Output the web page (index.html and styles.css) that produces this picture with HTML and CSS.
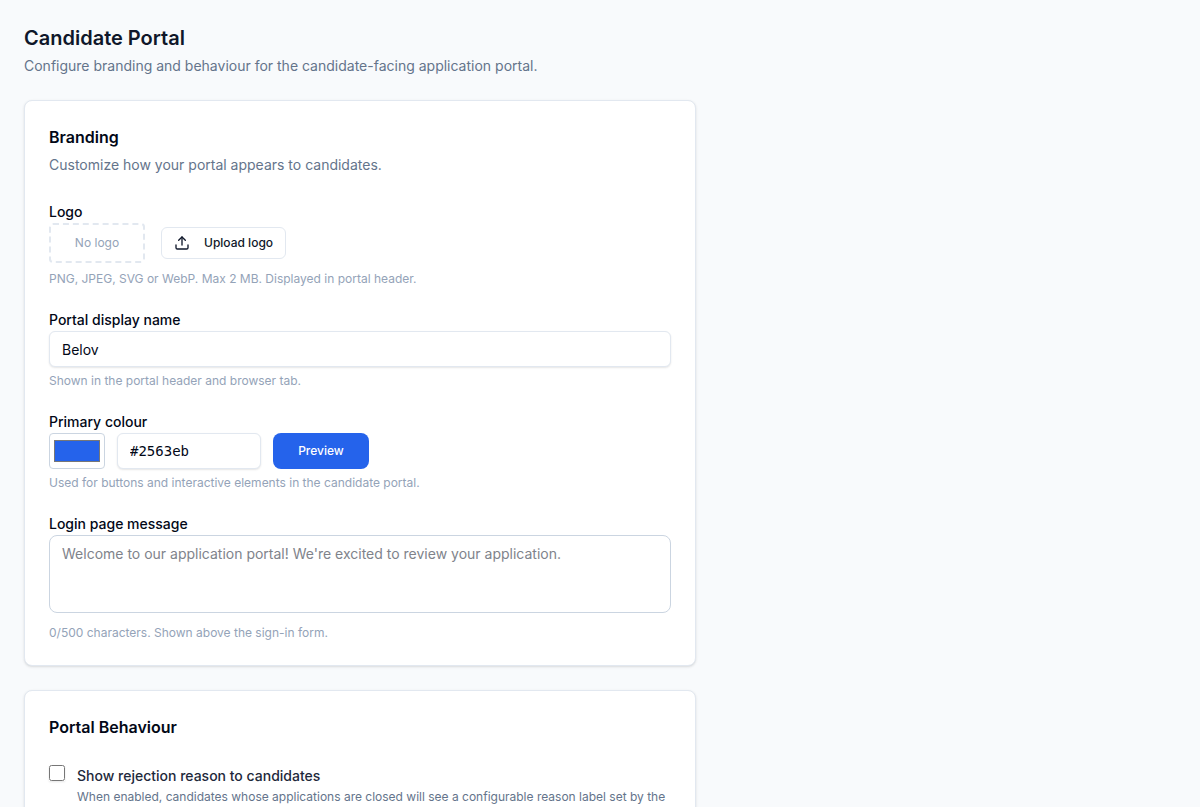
FILE: index.html
```html
<!DOCTYPE html>
<html lang="en">
<head>
  <meta charset="UTF-8">
  <meta name="viewport" content="width=device-width, initial-scale=1.0">
  <title>Candidate Portal</title>
  <link rel="stylesheet" href="styles.css">
</head>
<body>
  <main class="page">
    <header class="page-header">
      <h1>Candidate Portal</h1>
      <p>Configure branding and behaviour for the candidate-facing application portal.</p>
    </header>

    <section class="card">
      <div class="card-header">
        <h2>Branding</h2>
        <p>Customize how your portal appears to candidates.</p>
      </div>

      <div class="fields">
        <div class="field">
          <span class="label">Logo</span>
          <div class="row logo-row">
            <div class="logo-empty">No logo</div>
            <button type="button" class="btn-upload">
              <svg width="16" height="16" viewBox="0 0 24 24" fill="none" stroke="currentColor" stroke-width="2" stroke-linecap="round" stroke-linejoin="round" aria-hidden="true">
                <path d="M21 15v4a2 2 0 0 1-2 2H5a2 2 0 0 1-2-2v-4"/>
                <polyline points="17 8 12 3 7 8"/>
                <line x1="12" y1="3" x2="12" y2="15"/>
              </svg>
              Upload logo
            </button>
          </div>
          <p class="hint hint-far">PNG, JPEG, SVG or WebP. Max 2 MB. Displayed in portal header.</p>
        </div>

        <div class="field">
          <label class="label" for="portalName">Portal display name</label>
          <input type="text" id="portalName" class="input" value="Belov">
          <p class="hint">Shown in the portal header and browser tab.</p>
        </div>

        <div class="field">
          <label class="label" for="primaryColour">Primary colour</label>
          <div class="row colour-row">
            <input type="color" id="primaryColour" class="swatch" value="#2563eb">
            <input type="text" id="primaryHex" class="input hex" value="#2563eb" aria-label="Primary colour hex">
            <button type="button" class="btn-preview">Preview</button>
          </div>
          <p class="hint">Used for buttons and interactive elements in the candidate portal.</p>
        </div>

        <div class="field">
          <label class="label" for="loginMessage">Login page message</label>
          <textarea id="loginMessage" class="textarea" rows="3" maxlength="500" placeholder="Welcome to our application portal! We're excited to review your application."></textarea>
          <p class="hint hint-message">0/500 characters. Shown above the sign-in form.</p>
        </div>
      </div>
    </section>

    <section class="card">
      <div class="card-header">
        <h2>Portal Behaviour</h2>
      </div>

      <div class="option">
        <input type="checkbox" id="showReason" class="checkbox">
        <div>
          <label class="label option-label" for="showReason">Show rejection reason to candidates</label>
          <p class="option-text">When enabled, candidates whose applications are closed will see a configurable reason label set by the</p>
        </div>
      </div>
    </section>
  </main>
</body>
</html>
```

FILE: styles.css
```css
* {
  box-sizing: border-box;
}

body {
  margin: 0;
  background: #f8fafc;
  color: #020817;
  font-family: Inter, sans-serif;
  font-size: 14px;
  line-height: 20px;
}

h1,
h2,
p {
  margin: 0;
}

input,
textarea,
button {
  font: inherit;
  color: inherit;
}

.page {
  display: flex;
  flex-direction: column;
  gap: 24px;
  max-width: 720px;
  padding: 24px;
}

.page-header h1 {
  font-size: 20px;
  line-height: 28px;
  font-weight: 600;
  color: #0f172a;
}

.page-header p {
  margin-top: 4px;
  color: #64748b;
}

.card {
  background: #fff;
  border: 1px solid #e2e8f0;
  border-radius: 8px;
  box-shadow: 0 1px 3px rgba(0, 0, 0, 0.1), 0 1px 2px -1px rgba(0, 0, 0, 0.1);
  padding: 24px;
}

.card-header {
  margin-bottom: 24px;
}

.card-header h2 {
  font-size: 16px;
  line-height: 24px;
  font-weight: 600;
}

.card-header p {
  margin-top: 6px;
  color: #64748b;
}

.fields {
  display: flex;
  flex-direction: column;
  gap: 20px;
}

.label {
  display: block;
  padding-top: 2px;
  line-height: 22px;
  font-weight: 500;
}

.row {
  display: flex;
  align-items: center;
}

.logo-row {
  gap: 16px;
}

.colour-row {
  gap: 12px;
}

.logo-empty {
  display: flex;
  align-items: center;
  justify-content: center;
  width: 96px;
  height: 40px;
  border: 2px dashed #e2e8f0;
  border-radius: 4px;
  font-size: 12px;
  color: #94a3b8;
}

.btn-upload {
  display: flex;
  align-items: center;
  gap: 14px;
  height: 32px;
  padding: 0 12px;
  background: #fff;
  border: 1px solid #e2e8f0;
  border-radius: 6px;
  color: #0f172a;
  font-size: 12px;
  font-weight: 500;
  cursor: pointer;
}

.hint {
  margin-top: 6px;
  font-size: 12px;
  line-height: 16px;
  color: #94a3b8;
}

.hint-far {
  margin-top: 8px;
}

.hint-message {
  margin-top: 12px;
}

.input {
  display: block;
  width: 100%;
  height: 36px;
  padding: 4px 12px;
  background: #fff;
  border: 1px solid #e2e8f0;
  border-radius: 6px;
  box-shadow: 0 1px 2px rgba(0, 0, 0, 0.1);
}

.hex {
  width: 144px;
  font-family: "DejaVu Sans Mono", monospace;
}

.swatch {
  width: 56px;
  height: 36px;
  padding: 2px;
  background: #fff;
  border: 1px solid #cbd5e1;
  border-radius: 4px;
  cursor: pointer;
}

.btn-preview {
  width: 96px;
  height: 36px;
  padding: 0;
  background: #2563eb;
  border: none;
  border-radius: 8px;
  color: #fff;
  font-size: 12px;
  font-weight: 500;
  cursor: pointer;
}

.textarea {
  display: block;
  width: 100%;
  padding: 8px 12px;
  background: #fff;
  border: 1px solid #cbd5e1;
  border-radius: 8px;
  resize: none;
}

.textarea::placeholder {
  color: #80838b;
}

.option {
  display: flex;
  align-items: flex-start;
  gap: 12px;
}

.checkbox {
  width: 16px;
  height: 16px;
  margin: 2px 0 0;
  border-radius: 4px;
  box-shadow: 0 1px 2px rgba(0, 0, 0, 0.1);
}

.option-label {
  color: #1e293b;
}

.option-text {
  margin-top: 2px;
  font-size: 12px;
  line-height: 16px;
  color: #64748b;
}
```
